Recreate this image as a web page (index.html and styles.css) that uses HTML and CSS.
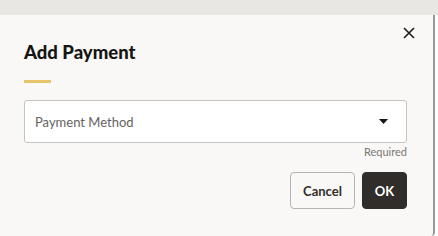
FILE: index.html
```html
<!DOCTYPE html>
<html>
<head>
<meta charset="utf-8">
<link rel="stylesheet" href="styles.css">
</head>
<body>
<div class="backdrop"></div>
<div class="dialog">
  <div class="header">
    <h1 class="title">Add Payment</h1>
    <button class="close" aria-label="Close">
      <svg width="12" height="12" viewBox="0 0 12 12"><path d="M1 1 L11 11 M11 1 L1 11" stroke="#1d1d1d" stroke-width="1.6" fill="none"/></svg>
    </button>
  </div>
  <div class="accent"></div>
  <div class="field">
    <div class="select">
      <span class="placeholder">Payment Method</span>
      <svg class="caret" width="9" height="5" viewBox="0 0 9 5"><path d="M0 0 H9 L4.5 5 Z" fill="#161513"/></svg>
    </div>
    <div class="hint">Required</div>
  </div>
  <div class="actions">
    <button class="btn btn-outline">Cancel</button>
    <button class="btn btn-primary">OK</button>
  </div>
</div>
</body>
</html>
```
FILE: styles.css
```css
html, body {
  margin: 0;
  padding: 0;
}
body {
  width: 438px;
  height: 236px;
  overflow: hidden;
  background: #ffffff;
  font-family: Lato, "Noto Sans", sans-serif;
}
.backdrop {
  height: 15px;
  background: #e9e7e4;
}
.dialog {
  width: 435px;
  height: 221px;
  box-sizing: border-box;
  background: #f9f8f6;
  border-right: 2px solid #9a9896;
  border-bottom-right-radius: 4px;
  padding: 0 26px 0 24px;
  display: flex;
  flex-direction: column;
}
.header {
  display: flex;
  justify-content: space-between;
  align-items: flex-start;
  padding-top: 12px;
}
.title {
  margin: 13px 0 0 0;
  font-size: 18.5px;
  line-height: 24px;
  font-weight: 900;
  color: #161513;
}
.close {
  border: 0;
  background: transparent;
  padding: 0;
  margin: 0 -8px 0 0;
  width: 12px;
  height: 12px;
  display: flex;
}
.accent {
  width: 27px;
  height: 3px;
  background: #e7c469;
  margin-top: 16px;
}
.field {
  margin-top: 17px;
  display: flex;
  flex-direction: column;
}
.select {
  height: 43px;
  box-sizing: border-box;
  background: #ffffff;
  border: 1px solid #c5c3c0;
  border-radius: 3px;
  display: flex;
  align-items: center;
  justify-content: space-between;
  padding: 0 18px 0 10px;
}
.placeholder {
  font-size: 13px;
  color: #65625f;
}
.caret {
  display: block;
}
.hint {
  align-self: flex-end;
  font-size: 11px;
  line-height: 14px;
  margin-top: 2px;
  color: #7a7774;
}
.actions {
  margin-top: 13px;
  display: flex;
  justify-content: flex-end;
  gap: 7px;
}
.btn {
  height: 37px;
  box-sizing: border-box;
  border-radius: 4px;
  font-family: Lato, "Noto Sans", sans-serif;
  font-size: 13px;
  font-weight: 700;
  padding: 0;
  cursor: pointer;
}
.btn-outline {
  width: 65px;
  background: #f9f8f6;
  border: 1px solid #b6b3b0;
  color: #312d2a;
}
.btn-primary {
  width: 45px;
  background: #312d2a;
  border: 1px solid #312d2a;
  color: #ffffff;
}
```
